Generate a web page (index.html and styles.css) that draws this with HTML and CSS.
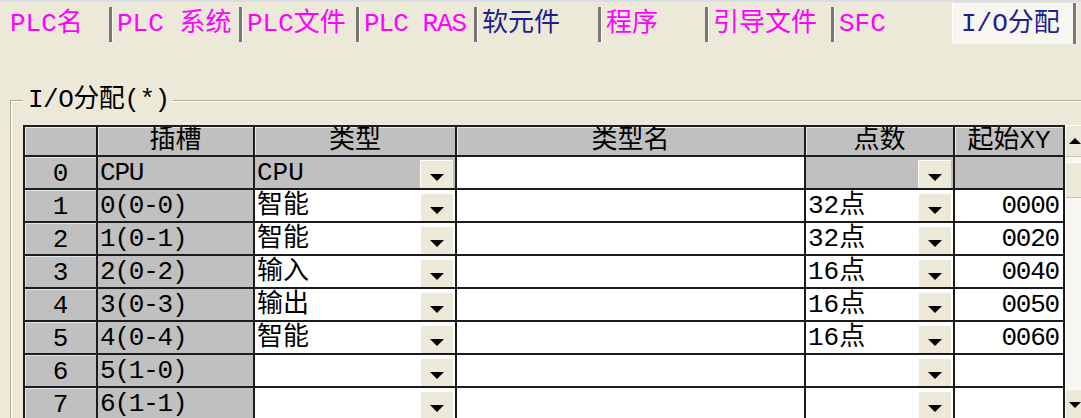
FILE: index.html
```html
<!DOCTYPE html>
<html lang="zh-CN">
<head>
    <meta charset="UTF-8">
    <title>PLC参数 - I/O分配</title>
    <link rel="stylesheet" href="styles.css">
</head>
<body>

    <div class="tabs">
        <div class="tab">PLC名</div>
        <div class="tab">PLC 系统</div>
        <div class="tab">PLC文件</div>
        <div class="tab">PLC RAS</div>
        <div class="tab navy">软元件</div>
        <div class="tab">程序</div>
        <div class="tab">引导文件</div>
        <div class="tab last">SFC</div>
        <div class="tab active">I/O分配</div>
    </div>

    <div class="panel">
        <fieldset class="group">
            <legend>I/O分配(*)</legend>
            <div class="grid-wrap">
                <div class="grid" id="io-grid">
                    <div class="hd corner"></div>
                    <div class="hd">插槽</div>
                    <div class="hd">类型</div>
                    <div class="hd">类型名</div>
                    <div class="hd">点数</div>
                    <div class="hd">起始XY</div>
                </div>
                <div class="vscroll">
                    <div class="sb-btn up"></div>
                    <div class="sb-thumb"></div>
                    <div class="sb-track"></div>
                    <div class="sb-btn down"></div>
                </div>
            </div>
        </fieldset>
    </div>

    <script>
        const rows = [
            ['0', 'CPU', 'CPU', '', '', ''],
            ['1', '0(0-0)', '智能', '', '32点', '0000'],
            ['2', '1(0-1)', '智能', '', '32点', '0020'],
            ['3', '2(0-2)', '输入', '', '16点', '0040'],
            ['4', '3(0-3)', '输出', '', '16点', '0050'],
            ['5', '4(0-4)', '智能', '', '16点', '0060'],
            ['6', '5(1-0)', '', '', '', ''],
            ['7', '6(1-1)', '', '', '', '']
        ];

        const grid = document.getElementById('io-grid');

        rows.forEach(function(r, i) {
            const grey = i === 0 ? ' grey' : '';
            grid.insertAdjacentHTML('beforeend',
                '<div class="num">' + r[0] + '</div>' +
                '<div class="slot">' + r[1] + '</div>' +
                '<div class="combo' + grey + '"><span class="val">' + r[2] + '</span><span class="drop"></span></div>' +
                '<div class="name">' + r[3] + '</div>' +
                '<div class="combo' + grey + '"><span class="val">' + r[4] + '</span><span class="drop"></span></div>' +
                '<div class="xy' + grey + '">' + r[5] + '</div>'
            );
        });
    </script>
</body>
</html>
```

FILE: styles.css
```css
html, body {
    margin: 0;
    overflow: hidden;
}

body {
    width: 1081px;
    height: 418px;
    background-color: #ECE9D8;
    font-family: "Liberation Mono", "Noto Sans CJK SC", monospace;
    font-size: 26px;
    color: #000;
}

/* tab strip */
.tabs {
    display: flex;
    height: 42px;
    border-top: 2px solid #d9dee6;
}

.tab {
    box-sizing: border-box;
    flex: none;
    margin-top: 5px;
    height: 35px;
    padding-left: 5px;
    line-height: 34px;
    color: #ff00ff;
    border-right: 3px solid #777;
    box-shadow: 1px 0 0 #fbfaf5;
    white-space: nowrap;
    overflow: hidden;
}

.tab:nth-child(1) { width: 112px; padding-left: 10px; }
.tab:nth-child(2) { width: 130px; }
.tab:nth-child(3) { width: 117px; }
.tab:nth-child(4) { width: 118px; letter-spacing: -1px; }
.tab:nth-child(5) { width: 124px; }
.tab:nth-child(6) { width: 107px; }
.tab:nth-child(7) { width: 126px; }
.tab:nth-child(8) { width: 118px; }
.tab:nth-child(9) { width: 124px; }

.tab.navy {
    color: #1e1e8c;
}

.tab.last {
    border-right: none;
    box-shadow: none;
}

.tab.active {
    margin-top: 1px;
    height: 41px;
    padding-top: 4px;
    padding-left: 8px;
    background-color: #f7f6f0;
    border-left: 1px solid #fff;
    color: #1e1e8c;
}

/* group box */
.group {
    margin: 42px 0 0 10px;
    padding: 11px 0 0 12px;
    border: 1px solid #aca899;
    box-shadow: inset 1px 1px 0 #fff;
    min-width: min-content;
}

.group legend {
    padding: 0 3px 0 5px;
    line-height: 28px;
    letter-spacing: -0.5px;
    background-color: #ECE9D8;
}

.grid-wrap {
    display: flex;
    align-items: stretch;
}

/* io table */
.grid {
    display: grid;
    grid-template-columns: 71px 155px 200px 347px 147px 108px;
    grid-template-rows: 28px;
    grid-auto-rows: 31px;
    gap: 2px;
    padding: 2px;
    background-color: #1c1c1c;
}

.grid > div {
    display: flex;
    align-items: center;
    line-height: 28px;
    background-color: #fff;
    white-space: nowrap;
    overflow: hidden;
}

.grid > .hd {
    justify-content: center;
    background-color: #c0c0c0;
    box-shadow: inset 1px 1px 0 #e4edf2;
}

.grid > .num {
    justify-content: center;
    padding-top: 3px;
    background-color: #c0c0c0;
    box-shadow: inset 1px 1px 0 #dfe6ea;
}

.grid > .slot {
    padding-left: 2px;
    letter-spacing: -1.2px;
    background-color: #c0c0c0;
}

.grid > .combo {
    padding-left: 2px;
}

.grid > .grey {
    background-color: #c0c0c0;
}

.combo .val {
    flex: 1;
}

.combo .drop {
    align-self: flex-end;
    display: flex;
    justify-content: center;
    align-items: center;
    width: 33px;
    height: 28px;
    margin-right: 2px;
    background-color: #ECE9D8;
    box-shadow: inset 1px 1px 0 #fff;
}

.combo .drop::after {
    content: "";
    margin-top: 6px;
    border-left: 7px solid transparent;
    border-right: 7px solid transparent;
    border-top: 7px solid #000;
}

.grid > .xy {
    justify-content: flex-end;
    padding-right: 4px;
    letter-spacing: -1.2px;
}

/* vertical scroll bar */
.vscroll {
    display: flex;
    flex-direction: column;
    width: 20px;
    background-color: #f7f6f0;
}

.sb-btn, .sb-thumb {
    background-color: #ECE9D8;
    box-shadow: inset 1px 1px 0 #fff, inset -1px -1px 0 #c9c6b8;
}

.sb-btn {
    display: flex;
    justify-content: center;
    align-items: center;
    height: 32px;
}

.sb-thumb {
    margin-top: 5px;
    height: 36px;
}

.sb-track {
    flex: 1;
}

.sb-btn.up::after {
    content: "";
    border-left: 6px solid transparent;
    border-right: 6px solid transparent;
    border-bottom: 6px solid #000;
}

.sb-btn.down::after {
    content: "";
    border-left: 6px solid transparent;
    border-right: 6px solid transparent;
    border-top: 6px solid #000;
}
```
